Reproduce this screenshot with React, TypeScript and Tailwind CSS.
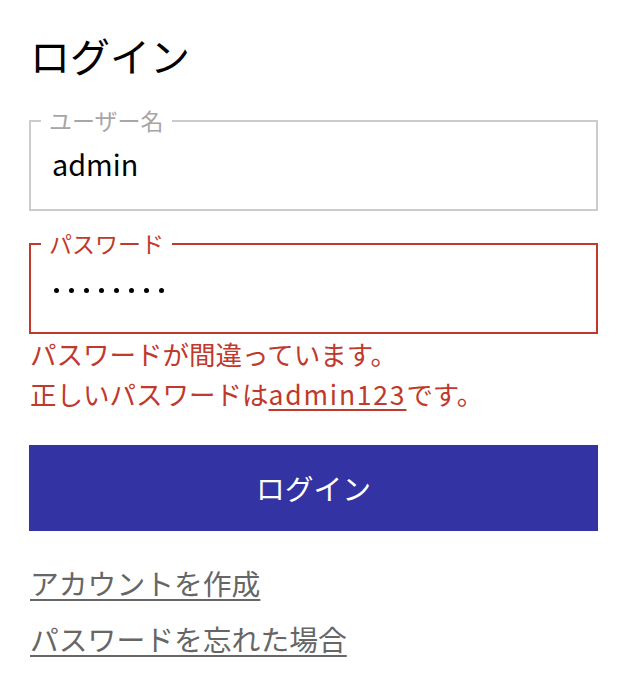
import React from "react";

const font = { fontFamily: '"Noto Sans CJK JP", "Noto Sans", sans-serif' };

interface FieldProps {
  label: string;
  error?: boolean;
  bodyClass: string;
  children: React.ReactNode;
}

const Field: React.FC<FieldProps> = ({ label, error, bodyClass, children }) => {
  return (
    <fieldset
      className={`border-2 px-[10px] ${
        error ? "border-[#c0392b]" : "border-[#cccccc]"
      }`}
    >
      <legend
        className={`px-2 text-[23px] leading-[23px] ${
          error ? "text-[#c0392b]" : "text-[#a6a6a6]"
        }`}
      >
        {label}
      </legend>
      <div className={`flex items-center pl-[10px] ${bodyClass}`}>{children}</div>
    </fieldset>
  );
};

const App: React.FC = () => {
  return (
    <div className="w-[626px] min-h-[684px] bg-white pt-[25px] pl-[29px] pr-[28px]" style={font}>
      <h1 className="pl-[1px] text-[40px] leading-[60px] font-normal text-black">ログイン</h1>

      <form className="mt-[24px]" onSubmit={(e) => e.preventDefault()}>
        <Field label="ユーザー名" bodyClass="h-[77px] pb-[13px]">
          <span className="pl-[1px] text-[28.8px] leading-[34px] text-black">admin</span>
        </Field>

        <div className="mt-[21px]">
          <Field label="パスワード" error bodyClass="h-[77px] pb-[6px]">
            <span className="flex gap-[10.5px] pl-[3px]">
              {Array.from({ length: 8 }).map((_, i) => (
                <span key={i} className="w-[4.5px] h-[4.5px] rounded-full bg-black" />
              ))}
            </span>
          </Field>
        </div>

        <div className="pl-[1px] text-[26.5px] leading-[40px] text-[#c0392b]">
          <p>パスワードが間違っています。</p>
          <p>
            正しいパスワードは
            <span className="underline underline-offset-[4px] tracking-[1.8px]">admin123</span>
            です。
          </p>
        </div>

        <button
          type="submit"
          className="mt-[31px] w-full h-[86px] bg-[#3333a3] text-white text-[28.8px]"
        >
          ログイン
        </button>
      </form>

      <div className="mt-[24px] pl-[1px] flex flex-col items-start text-[28.8px] leading-[56px] text-[#666666]">
        <a href="#" className="underline underline-offset-[4px]">
          アカウントを作成
        </a>
        <a href="#" className="underline underline-offset-[4px]">
          パスワードを忘れた場合
        </a>
      </div>
    </div>
  );
};

export default App;
